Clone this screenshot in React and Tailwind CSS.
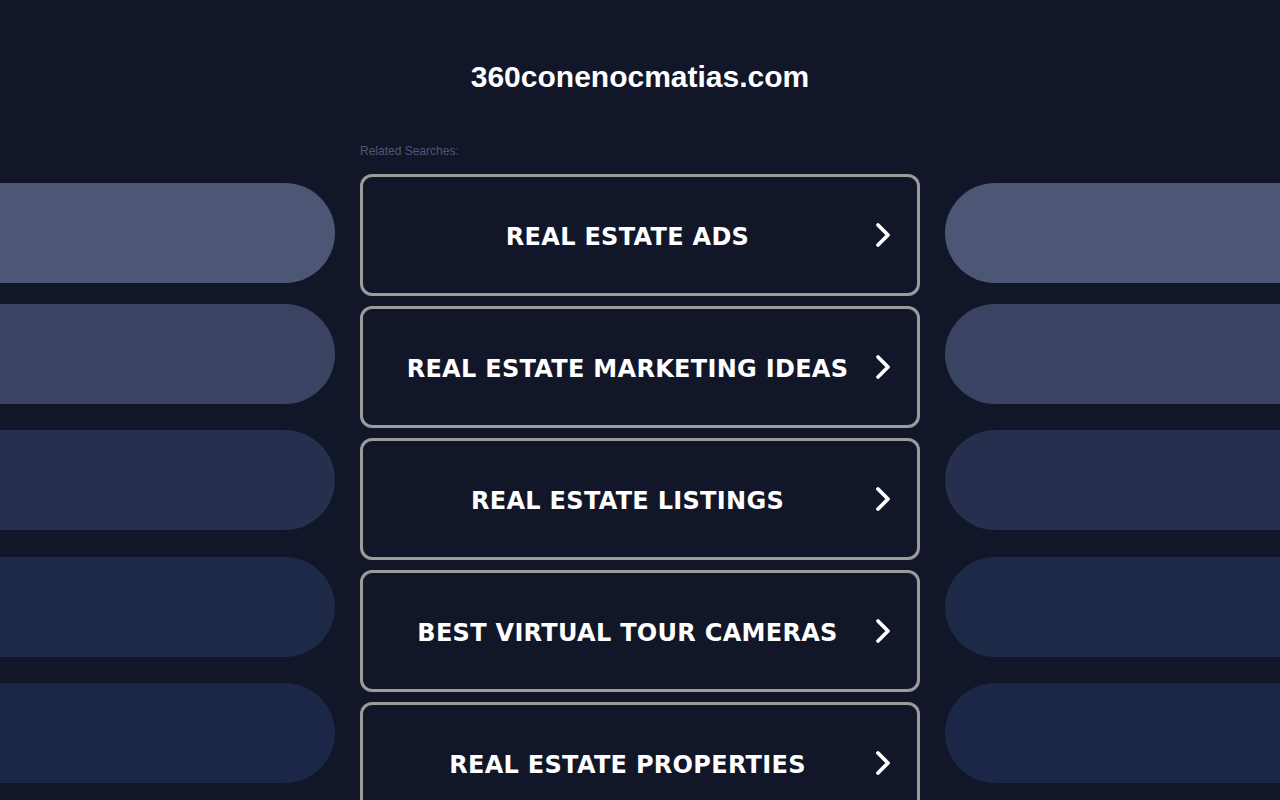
const searches = [
  'REAL ESTATE ADS',
  'REAL ESTATE MARKETING IDEAS',
  'REAL ESTATE LISTINGS',
  'BEST VIRTUAL TOUR CAMERAS',
  'REAL ESTATE PROPERTIES',
];

const pills = [
  { color: 'bg-[#4d5775]', mt: 'mt-[183px]' },
  { color: 'bg-[#3a4361]', mt: 'mt-[21px]' },
  { color: 'bg-[#262f4d]', mt: 'mt-[26px]' },
  { color: 'bg-[#1e2847]', mt: 'mt-[27px]' },
  { color: 'bg-[#1c2646]', mt: 'mt-[26px]' },
];

const Chevron = () => (
  <svg width="18" height="30" viewBox="0 0 18 30" className="shrink-0 mb-[4px]">
    <polyline points="4,5 14,15 4,25" fill="none" stroke="#fff" strokeWidth="3.8" strokeLinecap="round" strokeLinejoin="round" />
  </svg>
);

const SidePills = ({ side }) => (
  <div className="flex flex-col">
    {pills.map((p, i) => (
      <div
        key={i}
        className={`h-[100px] ${p.color} ${p.mt} ${side === 'left' ? 'rounded-r-[50px]' : 'rounded-l-[50px]'}`}
      />
    ))}
  </div>
);

export default function App() {
  return (
    <div className="h-[800px] overflow-hidden bg-[#111729] font-['Liberation_Sans',Arial,sans-serif]">
      <div className="grid grid-cols-[335px_560px_335px] gap-x-[25px]">
        <SidePills side="left" />

        <div className="flex flex-col">
          <h1 className="pt-[59px] h-[96px] text-center text-[30px] font-bold leading-[36px] text-white">
            360conenocmatias.com
          </h1>
          <div className="mt-[47px] h-[16px] text-[12px] leading-[16px] text-[#4d5775]">Related Searches:</div>
          <div className="mt-[15px] flex flex-col gap-[10px]">
            {searches.map((s) => (
              <a
                key={s}
                href="#"
                className="flex h-[122px] shrink-0 items-center gap-[8px] rounded-[12px] border-[3px] border-[#9b9b9b] pt-[3px] pl-[26px] pr-[25px]"
              >
                <span className="flex-1 text-center font-['DejaVu_Sans',Verdana,sans-serif] text-[24px] font-bold tracking-[0.3px] text-white">
                  {s}
                </span>
                <Chevron />
              </a>
            ))}
          </div>
        </div>

        <SidePills side="right" />
      </div>
    </div>
  );
}
